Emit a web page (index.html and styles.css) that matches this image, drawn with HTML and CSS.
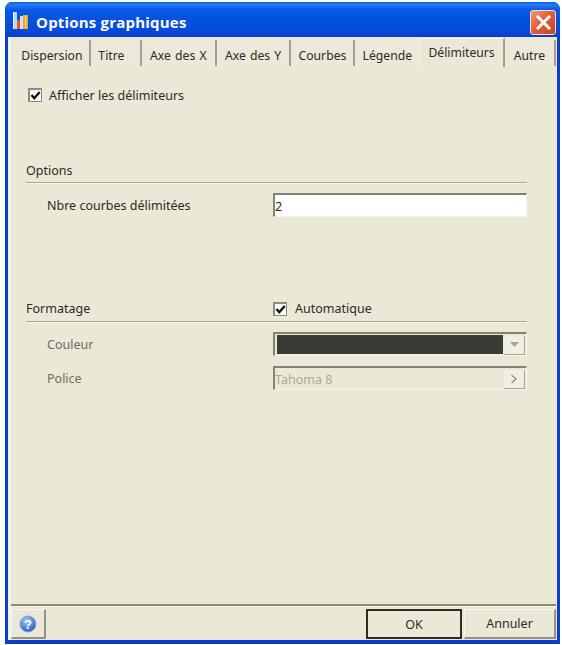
FILE: index.html
```html
<!DOCTYPE html>
<html lang="fr">
<head>
    <meta charset="UTF-8">
    <meta name="viewport" content="width=device-width, initial-scale=1.0">
    <title>Options graphiques</title>
    <link rel="stylesheet" href="styles.css">
</head>
<body>
    <div class="window">
        <header class="titlebar">
            <svg class="app-icon" width="18" height="18" viewBox="0 0 18 18">
                <rect x="1" y="0" width="4" height="17" fill="#bcd6f5"/>
                <rect x="1" y="0" width="1" height="17" fill="#eaf2fc"/>
                <rect x="5" y="8" width="3" height="9" fill="#d8572e"/>
                <rect x="8" y="4" width="3" height="13" fill="#cfe0f8"/>
                <rect x="11" y="3" width="5" height="14" fill="#eda92e"/>
                <rect x="13" y="4" width="1" height="12" fill="#f9dc8a"/>
            </svg>
            <h1 class="title">Options graphiques</h1>
            <button class="close-btn" aria-label="Fermer">
                <svg width="15" height="15" viewBox="0 0 15 15">
                    <path d="M2 2 L13 13 M13 2 L2 13" stroke="#fff" stroke-width="3" stroke-linecap="square"/>
                </svg>
            </button>
        </header>

        <div class="client">
            <nav class="tabs">
                <span class="tab tab-dispersion">Dispersion</span>
                <span class="tab tab-titre">Titre</span>
                <span class="tab tab-axex">Axe des X</span>
                <span class="tab tab-axey">Axe des Y</span>
                <span class="tab tab-courbes">Courbes</span>
                <span class="tab tab-legende">Légende</span>
                <span class="tab tab-active">Délimiteurs</span>
                <span class="tab tab-autre">Autre</span>
            </nav>

            <main class="page">
                <label class="check show-row">
                    <span class="checkbox"><svg width="11" height="11" viewBox="0 0 11 11"><path d="M1.5 5 L4.3 8.2 L9.7 2" fill="none" stroke="#111" stroke-width="2.4"/></svg></span>
                    Afficher les délimiteurs
                </label>

                <section class="group group-options">
                    <div class="group-head">
                        <span>Options</span>
                    </div>
                    <div class="row">
                        <span class="row-label">Nbre courbes délimitées</span>
                        <div class="field field-white">2</div>
                    </div>
                </section>

                <section class="group group-format">
                    <div class="group-head">
                        <span>Formatage</span>
                        <label class="check">
                            <span class="checkbox"><svg width="11" height="11" viewBox="0 0 11 11"><path d="M1.5 5 L4.3 8.2 L9.7 2" fill="none" stroke="#111" stroke-width="2.4"/></svg></span>
                            Automatique
                        </label>
                    </div>
                    <div class="row row-disabled">
                        <span class="row-label">Couleur</span>
                        <div class="field field-color">
                            <div class="swatch"></div>
                            <span class="side-btn"><svg width="9" height="5" viewBox="0 0 9 5"><path d="M0 0 H9 L4.5 5 Z" fill="#a5a497"/></svg></span>
                        </div>
                    </div>
                    <div class="row row-disabled">
                        <span class="row-label">Police</span>
                        <div class="field field-font">
                            <span class="field-text">Tahoma 8</span>
                            <span class="side-btn"><svg width="8" height="10" viewBox="0 0 8 10"><path d="M1.5 1 L6 5 L1.5 9" fill="none" stroke="#8f8e83" stroke-width="1.3"/></svg></span>
                        </div>
                    </div>
                </section>
            </main>

            <footer class="footer">
                <button class="btn btn-help" aria-label="Aide">
                    <svg width="18" height="18" viewBox="0 0 18 18">
                        <defs>
                            <radialGradient id="helpFill" cx="40%" cy="30%" r="75%">
                                <stop offset="0" stop-color="#a9c8f5"/>
                                <stop offset="1" stop-color="#1f55c4"/>
                            </radialGradient>
                        </defs>
                        <circle cx="9" cy="9" r="8" fill="url(#helpFill)" stroke="#8aa6dc"/>
                        <text x="9" y="13.5" text-anchor="middle" class="help-mark">?</text>
                    </svg>
                </button>
                <div class="footer-right">
                    <button class="btn btn-default">OK</button>
                    <button class="btn btn-cancel">Annuler</button>
                </div>
            </footer>
        </div>
    </div>
</body>
</html>
```

FILE: styles.css
```css
:root {
    --face: #ebe8d8;
    --line: #a9a797;
    --text: #2b2b24;
    --muted: #6e6d58;
}

* {
    margin: 0;
    padding: 0;
    box-sizing: border-box;
}

body {
    background-color: #ffffff;
    font-family: "Noto Sans", sans-serif;
    font-size: 12.5px;
    color: var(--text);
    padding: 2px 2px 0 5px;
}

.window {
    width: 555px;
    height: 642px;
    display: flex;
    flex-direction: column;
    background-color: #0a3ecb;
    border-radius: 7px 7px 0 0;
    padding: 0 3px 4px 3px;
}

.titlebar {
    height: 35px;
    margin: 0 -3px;
    padding: 5px 4px 0 7px;
    display: flex;
    align-items: center;
    border-radius: 7px 7px 0 0;
    background: linear-gradient(to bottom, #0a5de8 0%, #2a7bf2 8%, #0758e6 22%, #0250dc 60%, #0548dc 85%, #0b3fc4 100%);
}

.app-icon {
    flex: none;
    margin-top: -2px;
}

.title {
    font-family: "Open Sans", sans-serif;
    font-size: 15px;
    font-weight: 700;
    color: #ffffff;
    margin-left: 6px;
    flex: 1;
    letter-spacing: 0.2px;
}

.close-btn {
    width: 26px;
    height: 25px;
    display: flex;
    align-items: center;
    justify-content: center;
    border: 1px solid #f3ddd5;
    border-radius: 3px;
    background: linear-gradient(135deg, #f09a78 0%, #e0603a 45%, #c6401f 100%);
}

.client {
    flex: 1;
    display: flex;
    flex-direction: column;
    background-color: var(--face);
    border-left: 3px solid #eef0ea;
    border-right: 1px solid #e6e6da;
    min-height: 0;
}

.tabs {
    height: 29px;
    display: flex;
    align-items: stretch;
    padding: 2px 0 0 3px;
    border-bottom: 1px solid #f6f5ec;
    font-size: 12.2px;
}

.tab {
    display: flex;
    align-items: center;
    justify-content: center;
    height: 26px;
    margin-top: 1px;
    padding-top: 4px;
    background-color: #ece9da;
    border-right: 2px solid #a3a192;
    white-space: nowrap;
}

.tab-dispersion { width: 78px; padding-left: 1px; }
.tab-titre { width: 52px; padding-right: 8px; }
.tab-axex { width: 76px; word-spacing: 1px; }
.tab-axey { width: 76px; word-spacing: 1px; }
.tab-courbes { width: 65px; }
.tab-legende { width: 65px; border-right: none; }
.tab-autre { width: 52px; }

.tab-active {
    width: 87px;
    height: 29px;
    margin-top: -1px;
    padding-top: 0;
    padding-bottom: 2px;
    background-color: var(--face);
    border-top: 1px solid #f6f5ec;
    border-left: 1px solid #f6f5ec;
    margin-bottom: -1px;
}

.page {
    flex: 1;
    padding: 21px 29px 0 15px;
}

.check {
    display: flex;
    align-items: center;
    gap: 8px;
}

.show-row {
    margin-left: 2px;
    height: 16px;
    gap: 7px;
}

.checkbox {
    width: 14px;
    height: 14px;
    display: flex;
    align-items: center;
    justify-content: center;
    background-color: #ffffff;
    border: 1px solid #8c8b7c;
    border-top-width: 2px;
    border-left-width: 2px;
}

.group-head {
    height: 26px;
    display: grid;
    grid-template-columns: 247px 1fr;
    align-items: center;
    border-bottom: 1px solid var(--line);
    box-shadow: 0 1px 0 #f6f5ec;
}

.group-options .group-head > span {
    padding-top: 2px;
}

.group-options {
    margin-top: 54px;
}

.group-format {
    margin-top: 79px;
}

.row {
    display: grid;
    grid-template-columns: 247px 1fr;
    align-items: center;
    padding-top: 10px;
}

.row-label {
    padding-left: 21px;
}

.row-disabled .row-label {
    color: var(--muted);
}

.field {
    height: 24px;
    display: flex;
    align-items: center;
    border: 1px solid #f6f5ec;
    border-top: 2px solid #85836f;
    border-left: 2px solid #85836f;
}

.field-white {
    background-color: #ffffff;
    padding-top: 2px;
}

.swatch {
    flex: 1;
    height: 19px;
    margin: 0 1px 0 2px;
    background-color: #3b3a34;
}

.field-text {
    flex: 1;
    padding-top: 2px;
    color: #a9a89a;
}

.side-btn {
    width: 21px;
    height: 19px;
    flex: none;
    margin: 1px 1px 0 0;
    display: flex;
    align-items: center;
    justify-content: center;
    background-color: #f1efe4;
    border-right: 1px solid #a9a797;
    border-bottom: 1px solid #a9a797;
}

.footer {
    height: 36px;
    flex: none;
    display: flex;
    justify-content: space-between;
    align-items: flex-start;
    padding-top: 3px;
    border-top: 2px solid #8d8b7a;
    box-shadow: inset 0 1px 0 #f6f5ec;
}

.footer-right {
    display: flex;
    gap: 2px;
}

.btn {
    height: 30px;
    font-family: "Noto Sans", sans-serif;
    font-size: 12.5px;
    color: var(--text);
    background-color: var(--face);
    border: 1px solid #f8f7ef;
    border-right: 2px solid #94927f;
    border-bottom: 2px solid #94927f;
    display: flex;
    align-items: center;
    justify-content: center;
}

.btn-help {
    width: 35px;
}

.help-mark {
    font-family: "Liberation Sans", sans-serif;
    font-size: 13px;
    font-weight: 700;
    fill: #ffffff;
}

.btn-default {
    width: 96px;
    border: 2px solid #2c2b24;
}

.btn-cancel {
    width: 92px;
}
```
